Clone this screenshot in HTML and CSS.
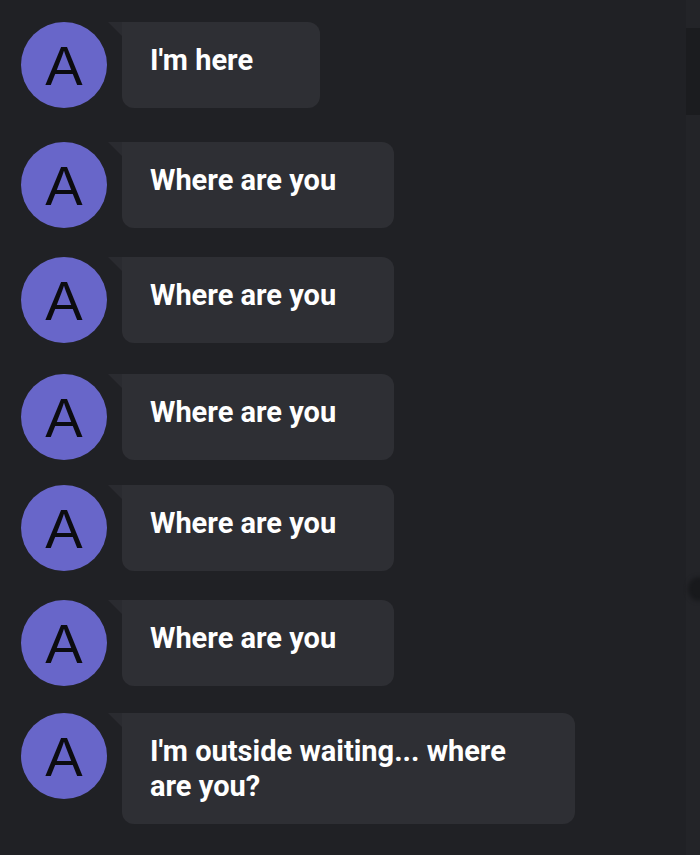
FILE: index.html
```html
<!DOCTYPE html>
<html lang="en">
<head>
<meta charset="utf-8">
<title>Chat</title>
<link rel="stylesheet" href="styles.css">
</head>
<body>
<div class="screen">
  <main class="thread">
    <div class="row row-first">
      <div class="avatar">A</div>
      <div class="bubble bubble-short">I'm here</div>
    </div>
    <div class="row row-gap-lg">
      <div class="avatar">A</div>
      <div class="bubble">Where are you</div>
    </div>
    <div class="row">
      <div class="avatar">A</div>
      <div class="bubble">Where are you</div>
    </div>
    <div class="row row-gap-md">
      <div class="avatar">A</div>
      <div class="bubble">Where are you</div>
    </div>
    <div class="row row-gap-sm">
      <div class="avatar">A</div>
      <div class="bubble">Where are you</div>
    </div>
    <div class="row">
      <div class="avatar">A</div>
      <div class="bubble">Where are you</div>
    </div>
    <div class="row row-gap-xs">
      <div class="avatar">A</div>
      <div class="bubble bubble-long">I'm outside waiting... where are you?</div>
    </div>
  </main>
  <div class="scrollbar"><div class="thumb"></div></div>
  <div class="handle"></div>
</div>
</body>
</html>
```
FILE: styles.css
```css
* { box-sizing: border-box; }
html, body {
  margin: 0;
  padding: 0;
  background: #202125;
}
body {
  font-family: Roboto, "Noto Sans", "Liberation Sans", sans-serif;
  color: #ffffff;
}
.screen {
  position: relative;
  width: 700px;
  height: 855px;
  overflow: hidden;
  background: #202125;
}
.thread {
  display: flex;
  flex-direction: column;
  padding: 22px 0 0 21px;
}
.row {
  display: flex;
  align-items: flex-start;
  gap: 15px;
  margin-top: 29px;
}
.row-first { margin-top: 0; }
.row-gap-lg { margin-top: 34px; }
.row-gap-md { margin-top: 31px; }
.row-gap-sm { margin-top: 25px; }
.row-gap-xs { margin-top: 27px; }
.avatar {
  flex: none;
  width: 86px;
  height: 86px;
  border-radius: 50%;
  background: #6866c9;
  color: #0c0c10;
  font-family: "Liberation Sans", Arial, sans-serif;
  font-weight: 400;
  font-size: 56px;
  line-height: 88px;
  text-align: center;
}
.bubble {
  position: relative;
  min-height: 86px;
  padding: 21px 58px 20px 28px;
  background: #2e2f34;
  border-radius: 0 12px 12px 12px;
  font-size: 29px;
  font-weight: 700;
  line-height: 35px;
}
.bubble::before {
  content: "";
  position: absolute;
  top: 0;
  left: -14px;
  width: 14px;
  height: 14px;
  background: #2a2b30;
  clip-path: polygon(0 0, 100% 0, 100% 100%);
}
.bubble-short { width: 198px; }
.bubble-long { width: 453px; padding-right: 60px; }
.scrollbar {
  position: absolute;
  top: 0;
  right: 0;
  width: 14px;
  height: 100%;
  background: #232428;
}
.thumb {
  margin-top: 28px;
  height: 87px;
  background: #1b1c1f;
}
.handle {
  position: absolute;
  right: -10px;
  top: 577px;
  width: 22px;
  height: 24px;
  border-radius: 50%;
  background: #18191c;
  filter: blur(2px);
}
```
